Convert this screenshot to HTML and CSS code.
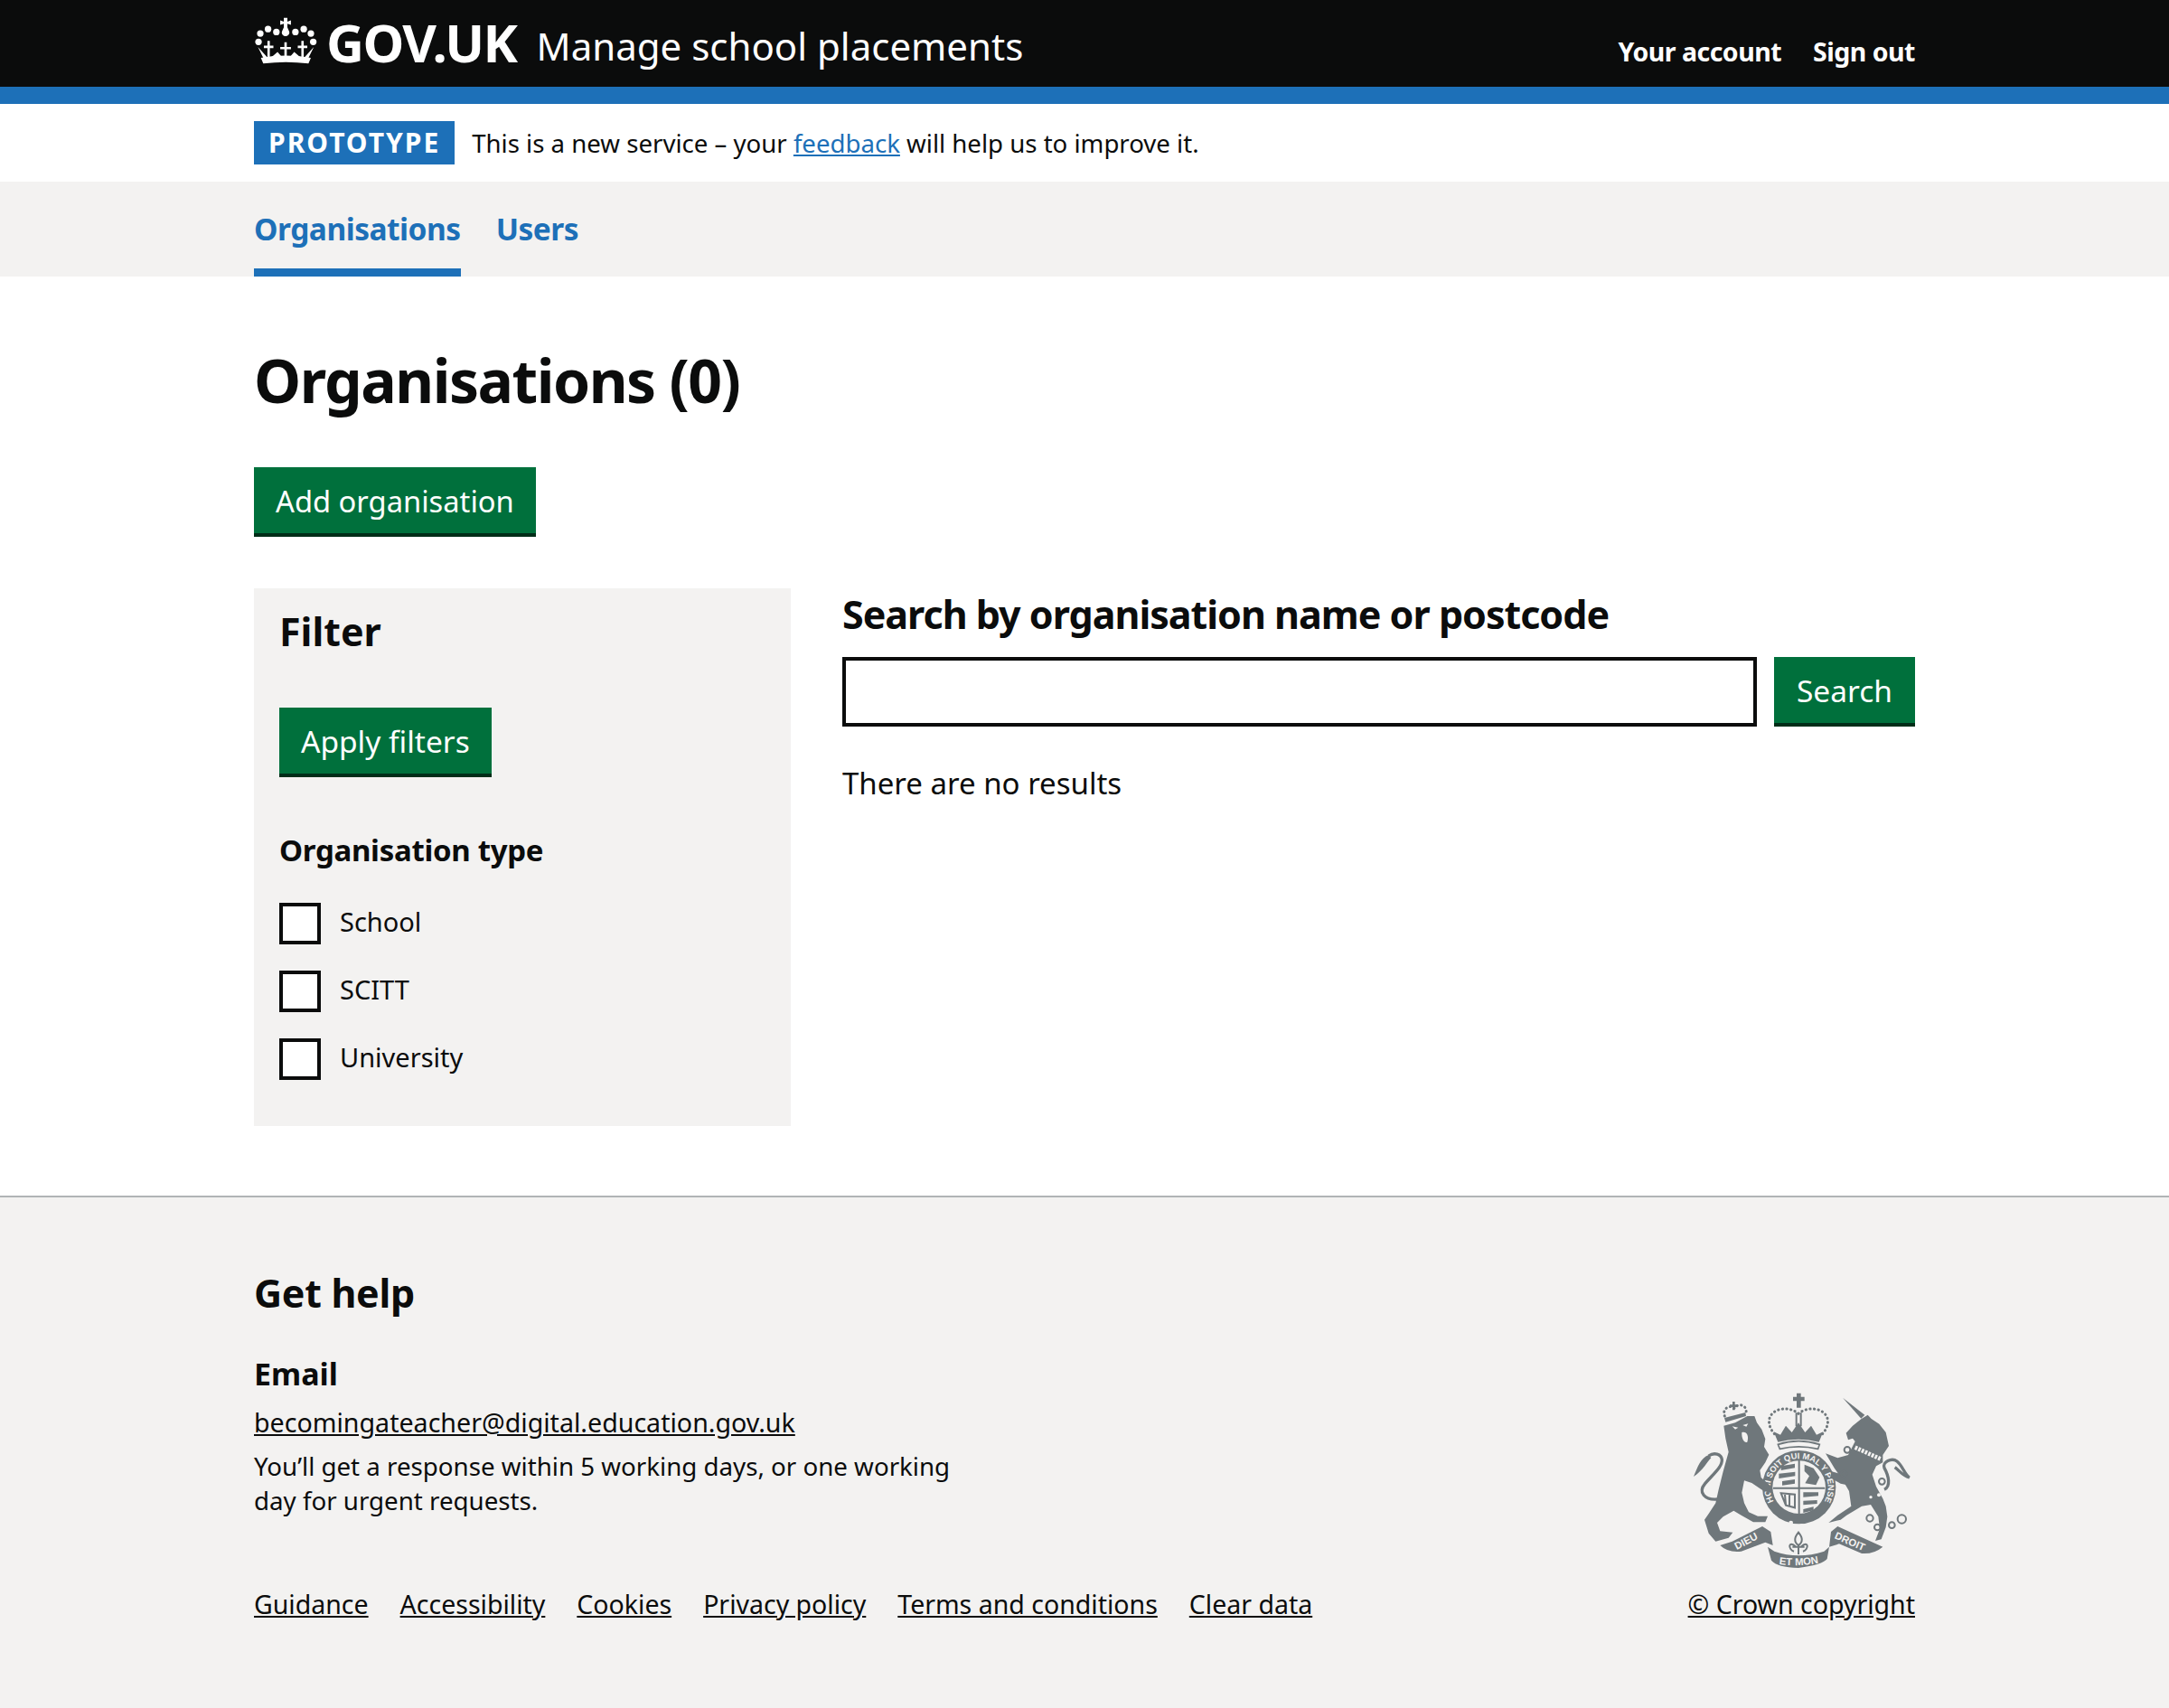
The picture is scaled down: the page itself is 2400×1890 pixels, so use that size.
FILE: index.html
```html
<!DOCTYPE html>
<html lang="en">

<head>
    <meta charset="UTF-8">
    <meta name="viewport" content="width=device-width, initial-scale=1.0">
    <title>Organisations - Manage school placements</title>
    <link rel="stylesheet" href="styles.css">
</head>

<body>

    <header class="header">
        <div class="container header-row">
            <a class="logo" href="#">
                <svg class="crown" viewBox="30 28 210 158" aria-hidden="true">
                    <path d="M129 30h12v13l12-4v15l-12-4v12l6 14c3 8-3 16-12 16s-15-8-12-16l6-14V50l-12 4V39l12 4z" />
                    <circle cx="50" cy="83" r="11" />
                    <circle cx="76" cy="68" r="11" />
                    <circle cx="104" cy="78" r="11" />
                    <circle cx="168" cy="78" r="11" />
                    <circle cx="196" cy="68" r="11" />
                    <circle cx="220" cy="83" r="11" />
                    <circle cx="44" cy="111" r="11" />
                    <circle cx="228" cy="111" r="11" />
                    <path d="M60 184l-8-19q83-15 168 0l-8 19q-76-10-152 0z" />
                    <path d="M42 128l18 37h15zM230 128l-18 37h-15zM85 165l23-20 17 20zM147 165l17-20 23 20z" />
                    <path d="M74 108h8v16h12v8H82v33h-8v-33H62v-8h12zM131 112h8v16h14v8h-14v29h-8v-29h-14v-8h14zM188 108h8v16h12v8h-12v33h-8v-33h-12v-8h12z" />
                </svg>
                <span class="logo-text">GOV.UK</span>
            </a>
            <a class="service-name" href="#">Manage school placements</a>
            <nav class="account-nav">
                <a href="#">Your account</a>
                <a href="#">Sign out</a>
            </nav>
        </div>
    </header>
    <div class="header-line"></div>

    <div class="container phase-banner">
        <strong class="tag">PROTOTYPE</strong>
        <span>This is a new service – your <a href="#" class="link">feedback</a> will help us to improve it.</span>
    </div>

    <nav class="primary-nav">
        <div class="container primary-nav-row">
            <a href="#" class="current">Organisations</a>
            <a href="#">Users</a>
        </div>
    </nav>

    <main class="container main">
        <h1>Organisations (0)</h1>
        <a href="#" class="button add-button">Add organisation</a>

        <div class="columns">
            <form class="filter">
                <h2>Filter</h2>
                <button type="button" class="button">Apply filters</button>
                <h3>Organisation type</h3>
                <label class="check"><input type="checkbox"> School</label>
                <label class="check"><input type="checkbox"> SCITT</label>
                <label class="check"><input type="checkbox"> University</label>
            </form>

            <div class="results">
                <label class="search-label" for="search">Search by organisation name or postcode</label>
                <div class="search-row">
                    <input type="text" id="search" class="search-input">
                    <button type="button" class="button search-button">Search</button>
                </div>
                <p>There are no results</p>
            </div>
        </div>
    </main>

    <footer class="footer">
        <div class="container">
            <div class="footer-top">
                <div class="help">
                    <h2>Get help</h2>
                    <h3>Email</h3>
                    <a href="#" class="footer-link email-link">becomingateacher@digital.education.gov.uk</a>
                    <p>You’ll get a response within 5 working days, or one working day for urgent requests.</p>
                </div>
                <svg class="crest" viewBox="0 0 741 600" role="img" aria-label="Royal coat of arms">
                    <defs>
                        <path id="garter" d="M307 412A96 96 0 1 1 417 412" />
                        <path id="dieu" d="M142 547L240 495" />
                        <path id="etmon" d="M278 585Q360 600 445 580" />
                        <path id="droit" d="M468 497L585 548" />
                    </defs>
                    <!-- royal crown -->
                    <path class="crest-fill" d="M354 20h14v12h12v14h-12v22h-14V46h-12V32h12z" />
                    <path class="crest-line" d="M353 85V130M368 85V130" />
                    <path class="crest-dots" d="M360 88C335 65 280 65 265 100c-8 22 5 45 18 58M360 88c25-23 80-23 95 12 8 22-5 45-18 58" />
                    <path class="crest-fill" d="M278 148l22 10 18-30 20 22 22-32 22 32 20-22 18 30 22-10-14 34q-68-17-136 0z" />
                    <path class="crest-ribbon-band" d="M292 190q68-22 138 0l-5 15q-65-15-127 0z" />
                    <!-- shield and garter -->
                    <circle class="crest-fill" cx="362" cy="332" r="122" />
                    <circle class="crest-bg" cx="362" cy="332" r="88" />
                    <g transform="translate(-90 -43)">
                        <path class="crest-line" d="M452 285V470M366 378H538" />
                        <!-- quarters: lions, lion, harp, lions -->
                        <path class="crest-fill" d="M392 305l46-8v14l-46 8zM385 330l54-6v14l-54 8zM396 355l42-6v14l-42 6z" />
                        <path class="crest-fill" d="M470 300l30 12 20 30-12 26-36-6 14-24-16-16z" />
                        <path class="crest-line" d="M392 395l46 4v44l-30-8zM405 400l3 34M420 400v36" />
                        <path class="crest-fill" d="M466 392l50 0v12l-50 4zM466 420l46-2v12l-46 4zM466 448l34-8v12l-34 8z" />
                    </g>
                    <text class="crest-text garter-text"><textPath href="#garter" startOffset="50%" text-anchor="middle">HONI SOIT QUI MAL Y PENSE</textPath></text>
                    <circle class="crest-bg" cx="335" cy="450" r="7" />
                    <circle class="crest-bg" cx="370" cy="461" r="7" />
                    <!-- lion -->
                    <path class="crest-line-thick" d="M90 372C50 375 25 350 50 320 75 290 108 265 106 240 104 222 80 215 62 228" />
                    <path class="crest-fill" d="M12 297c13-32 23-62 50-72l8 10c-15 15-25 40-58 62z" />
                    <path class="crest-fill" d="M112 128l38-10 40-22h24l8 22 16 22 12 32-4 26 16 26-12 26-18 26 4 24 34 30 2 22-27-7-40-27-25-8-8 40 8 35 15 30 30 13h33l-8 20h-40l-40-23-25-15-35 20-20 20 10 28 42 4-14 18-43 12-23-27-14-45 14-20 23-35 10-45 15-60 18-65-10-45z" />
                    <path class="crest-fill" d="M118 116l68-20-2-12-70 18z" />
                    <path class="crest-dots" d="M115 96c-10-26 20-40 33-26 12-20 42-10 38 14" />
                    <path class="crest-fill" d="M141 48h8v10h9v8h-9v10h-8V66h-9v-8h9z" />
                    <path class="crest-bg" d="M140 130l20 4-10 6zM175 126l18-5-6 10zM172 150c15-5 25 10 18 32-8 5-20-10-18-32z" />
                    <!-- unicorn -->
                    <path class="crest-fill" d="M507 35l73 57-12 12z" />
                    <path class="crest-fill" d="M518 152l22-24 28-22 22-14 12 13 26 17 22 28 10 45-20 30v25l-22 12-13 28 13 40 22 40 10 25 5 35-5 35-15 40-20 5 15-40-5-40-25-40-30 5-50 30-20 15-40 10 30-25 45-30-7-50-23-40-25-35-30-50 40 15 35-10 23-45-8-10-15 5z" />
                    <path class="crest-fill" d="M470 280l40 10 12 35-22-5-35-20z" />
                    <path class="crest-dots-bg" d="M548 200L632 238" />
                    <circle class="crest-ring" cx="522" cy="208" r="10" />
                    <circle class="crest-ring" cx="510" cy="288" r="10" />
                    <circle class="crest-ring" cx="637" cy="313" r="10" />
                    <circle class="crest-bg" cx="627" cy="358" r="6" />
                    <circle class="crest-bg" cx="600" cy="365" r="5" />
                    <circle class="crest-ring" cx="597" cy="435" r="11" />
                    <circle class="crest-ring" cx="622" cy="465" r="10" />
                    <circle class="crest-ring" cx="670" cy="458" r="10" />
                    <circle class="crest-ring" cx="703" cy="438" r="14" />
                    <path class="crest-line-thick" d="M645 340c22-10 15-45 0-72-8-20 25-35 42-22 18 14 25 42 41 54-22-6-32-22-48-34" />
                    <!-- motto ribbon -->
                    <path class="crest-fill" d="M100 525l40-13 100-50 28 18 7 45-25-10-80 30q-45 5-70-20z" />
                    <path class="crest-fill" d="M258 530l22 15q80 27 165 0l17-15-7 40q-15 20-95 30-70-2-90-25z" />
                    <path class="crest-fill" d="M468 480l22-18 150 68q-30 25-70 22l-75-32-33 10z" />
                    <text class="crest-text ribbon-text"><textPath href="#dieu" startOffset="50%" text-anchor="middle">DIEU</textPath></text>
                    <text class="crest-text ribbon-text"><textPath href="#etmon" startOffset="50%" text-anchor="middle">ET MON</textPath></text>
                    <text class="crest-text ribbon-text"><textPath href="#droit" startOffset="50%" text-anchor="middle">DROIT</textPath></text>
                    <path class="crest-line" d="M360 482c-15 18-15 33 0 43 15-10 15-25 0-43zM352 530c-27-25-27 10-7 15M368 530c27-25 27 10 7 15M340 530h40M360 525v30" />
                </svg>
            </div>
            <div class="footer-bottom">
                <nav class="footer-nav">
                    <a href="#" class="footer-link">Guidance</a>
                    <a href="#" class="footer-link">Accessibility</a>
                    <a href="#" class="footer-link">Cookies</a>
                    <a href="#" class="footer-link">Privacy policy</a>
                    <a href="#" class="footer-link">Terms and conditions</a>
                    <a href="#" class="footer-link">Clear data</a>
                </nav>
                <a href="#" class="footer-link">© Crown copyright</a>
            </div>
        </div>
    </footer>

</body>

</html>
```

FILE: styles.css
```css
* {
    box-sizing: border-box;
}

body {
    margin: 0;
    font-family: 'Noto Sans', sans-serif;
    font-size: 33px;
    line-height: 38px;
    color: #0b0c0c;
    background-color: #fff;
}

a {
    color: inherit;
}

.container {
    width: 1838px;
    margin: 0 auto;
}

/* Header */
.header {
    height: 96px;
    background-color: #0b0c0c;
    color: #fff;
}

.header-row {
    display: flex;
    align-items: center;
    height: 96px;
}

.header a {
    color: #fff;
    text-decoration: none;
}

.logo {
    display: flex;
    align-items: center;
    height: 96px;
}

.crown {
    width: 70px;
    height: 52px;
    margin-top: -6px;
    fill: #fff;
}

.logo-text {
    margin-left: 10px;
    font-size: 58px;
    font-weight: 700;
    letter-spacing: -1.5px;
    margin-top: -2px;
}

.service-name {
    margin-left: 22px;
    font-size: 42px;
    margin-top: 6px;
}

.account-nav {
    display: flex;
    gap: 35px;
    margin-left: auto;
    font-size: 28.5px;
    font-weight: 700;
    letter-spacing: -0.5px;
    margin-top: 17px;
}

.header-line {
    height: 19px;
    background-color: #1d70b8;
}

/* Phase banner */
.phase-banner {
    display: flex;
    align-items: center;
    gap: 19px;
    height: 86px;
    font-size: 27.6px;
}

.tag {
    padding: 6px 16px;
    height: 48px;
    background-color: #1d70b8;
    color: #fff;
    font-size: 30px;
    line-height: 36px;
    letter-spacing: 2px;
}

.link {
    color: #1d70b8;
}

/* Primary navigation */
.primary-nav {
    height: 105px;
    background-color: #f3f2f1;
}

.primary-nav-row {
    display: flex;
    gap: 39px;
    height: 105px;
}

.primary-nav-row a {
    padding-top: 33px;
    color: #1d70b8;
    font-size: 33.5px;
    font-weight: 700;
    letter-spacing: -0.5px;
    text-decoration: none;
}

.primary-nav-row .current {
    border-bottom: 9px solid #1d70b8;
}

/* Main */
.main {
    padding-top: 71px;
    height: 1017px;
}

h1 {
    margin: 0 0 54px;
    font-size: 66px;
    line-height: 86px;
    letter-spacing: -1.5px;
}

.button {
    display: inline-block;
    padding: 14px 24px 12px;
    border: none;
    border-bottom: 4px solid #002d18;
    background-color: #00703c;
    color: #fff;
    font-family: inherit;
    font-size: 33.5px;
    line-height: 47px;
    text-decoration: none;
}

.add-button {
    display: block;
    width: 312px;
    font-size: 32.7px;
    white-space: nowrap;
}

.search-button {
    padding-left: 25px;
    padding-right: 25px;
}

.columns {
    display: flex;
    gap: 57px;
    margin-top: 57px;
}

.filter {
    width: 594px;
    height: 595px;
    padding: 23px 28px;
    background-color: #f3f2f1;
}

.filter h2 {
    margin: 0 0 59px;
    font-size: 43px;
    line-height: 50px;
}

.filter h3 {
    margin: 62px 0 39px;
    font-size: 33px;
    line-height: 38px;
    letter-spacing: -0.3px;
}

.check {
    display: flex;
    align-items: flex-start;
    gap: 21px;
    height: 46px;
    margin-bottom: 29px;
    font-size: 29px;
    line-height: 42px;
}

.check input {
    appearance: none;
    width: 46px;
    height: 46px;
    margin: 0;
    border: 4px solid #0b0c0c;
    background-color: #fff;
}

.results {
    flex: 1;
}

.search-label {
    display: block;
    height: 76px;
    padding-top: 4px;
    font-size: 43px;
    line-height: 50px;
    font-weight: 700;
    letter-spacing: -1px;
}

.search-row {
    display: flex;
    gap: 19px;
}

.search-input {
    flex: 1;
    height: 77px;
    border: 4px solid #0b0c0c;
    border-radius: 0;
}

.results p {
    margin: 44px 0 0;
}

/* Footer */
.footer {
    height: 567px;
    border-top: 2px solid #b1b4b6;
    background-color: #f3f2f1;
    font-size: 27.7px;
}

.footer-top {
    display: flex;
    justify-content: space-between;
    align-items: flex-end;
    height: 415px;
    padding-top: 78px;
}

.help {
    width: 780px;
    align-self: flex-start;
}

.help h2 {
    margin: 0 0 39px;
    font-size: 43px;
    line-height: 56px;
    letter-spacing: -0.3px;
}

.help h3 {
    margin: 0 0 13px;
    font-size: 34px;
    line-height: 44px;
}

.help p {
    margin: 10px 0 0;
}

.email-link {
    font-size: 28.6px;
}

.crest {
    width: 247px;
    height: 200px;
    margin-right: 2px;
    margin-bottom: 5px;
}

.crest-fill {
    fill: #6f777b;
}

.crest-bg {
    fill: #f3f2f1;
}

.crest-line {
    fill: none;
    stroke: #6f777b;
    stroke-width: 6;
}

.crest-line-thick {
    fill: none;
    stroke: #6f777b;
    stroke-width: 10;
}

.crest-ribbon-band {
    fill: #f3f2f1;
    stroke: #6f777b;
    stroke-width: 5;
}

.crest-dots {
    fill: none;
    stroke: #6f777b;
    stroke-width: 9;
    stroke-linecap: round;
    stroke-dasharray: 1 13;
}

.crest-dots-bg {
    fill: none;
    stroke: #f3f2f1;
    stroke-width: 14;
    stroke-dasharray: 8 4;
}

.crest-ring {
    fill: none;
    stroke: #6f777b;
    stroke-width: 6;
}

.crest-text {
    fill: #f3f2f1;
    font-family: 'Liberation Sans', sans-serif;
    font-weight: 700;
}

.garter-text {
    font-size: 28px;
}

.ribbon-text {
    font-size: 34px;
}

.footer-bottom {
    display: flex;
    justify-content: space-between;
    padding-top: 16px;
    font-size: 28.5px;
}

.footer-nav {
    display: flex;
    gap: 35px;
}

.footer-link {
    color: #0b0c0c;
}
```
